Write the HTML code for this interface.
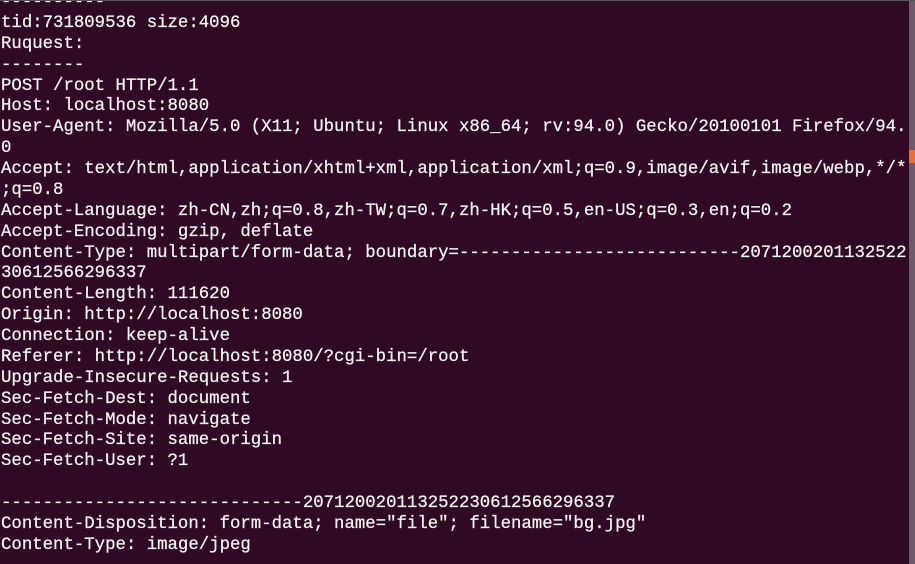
<!DOCTYPE html>
<html><head><meta charset="utf-8"><style>
html,body{margin:0;padding:0;width:915px;height:564px;overflow:hidden;background:#300a24;}
pre{position:absolute;left:1px;top:-7px;margin:0;font-family:"Liberation Mono","DejaVu Sans Mono",monospace;font-size:17.35px;line-height:20.88px;color:#f2f2f0;white-space:pre;-webkit-text-stroke:0.25px #f2f2f0;}
.sb{position:absolute;left:909px;top:0;width:6px;height:564px;background:#6e5a6b;}
.th{position:absolute;left:909px;top:150px;width:6px;height:13px;background:#e0703e;}
.tl{position:absolute;left:0;top:0;width:915px;height:1px;background:#555;}
</style></head><body>
<pre>----------
tid:731809536 size:4096
Ruquest:
--------
POST /root HTTP/1.1
Host: localhost:8080
User-Agent: Mozilla/5.0 (X11; Ubuntu; Linux x86_64; rv:94.0) Gecko/20100101 Firefox/94.
0
Accept: text/html,application/xhtml+xml,application/xml;q=0.9,image/avif,image/webp,*/*
;q=0.8
Accept-Language: zh-CN,zh;q=0.8,zh-TW;q=0.7,zh-HK;q=0.5,en-US;q=0.3,en;q=0.2
Accept-Encoding: gzip, deflate
Content-Type: multipart/form-data; boundary=---------------------------2071200201132522
30612566296337
Content-Length: 111620
Origin: http://localhost:8080
Connection: keep-alive
Referer: http://localhost:8080/?cgi-bin=/root
Upgrade-Insecure-Requests: 1
Sec-Fetch-Dest: document
Sec-Fetch-Mode: navigate
Sec-Fetch-Site: same-origin
Sec-Fetch-User: ?1

-----------------------------207120020113252230612566296337
Content-Disposition: form-data; name="file"; filename="bg.jpg"
Content-Type: image/jpeg</pre>
<div class="sb"></div><div class="th"></div><div class="tl"></div>
</body></html>
